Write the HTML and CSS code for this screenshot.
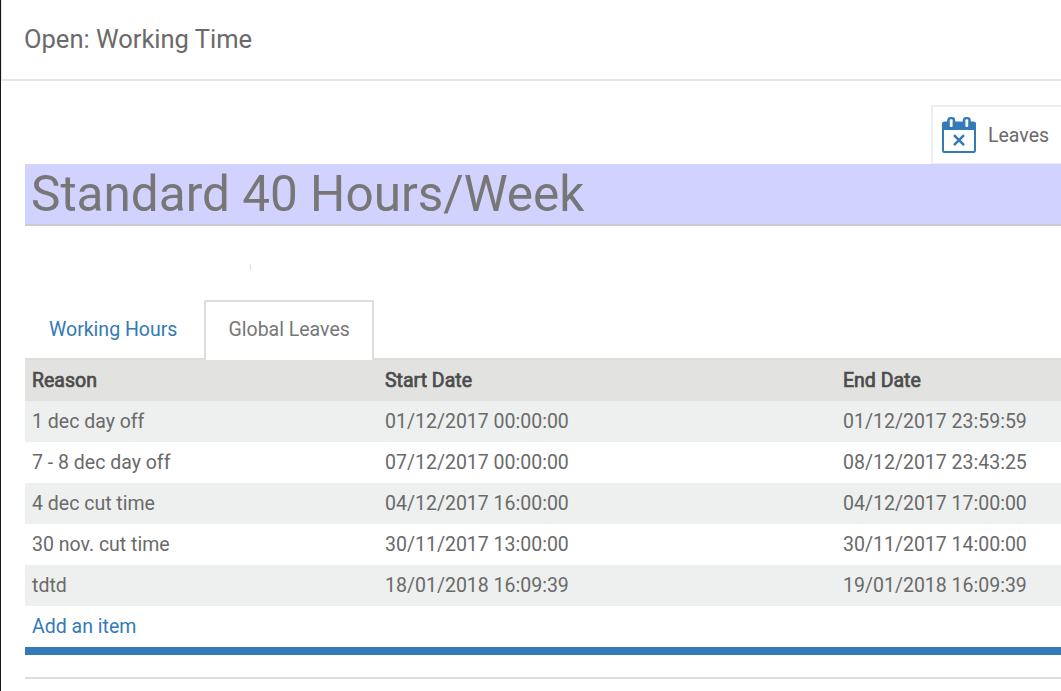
FILE: index.html
```html
<!DOCTYPE html>
<html lang="en">
<head>
<meta charset="utf-8">
<title>Open: Working Time</title>
<link rel="stylesheet" href="styles.css">
</head>
<body>
<div class="dialog">
  <header class="dialog-header"><h1 class="dialog-title">Open: Working Time</h1></header>
  <main class="sheet">
    <div class="button-box">
      <button class="stat-button">
        <svg class="calendar" width="34" height="37" viewBox="0 0 34 37" fill="none">
          <rect x="1" y="6" width="32" height="29" rx="1.8" stroke="#337ab7" stroke-width="2"/>
          <path d="M0 13V7Q0 4.5 2.5 4.5H31.5Q34 4.5 34 7V13Z" fill="#337ab7"/>
          <rect x="5.2" y="0" width="8" height="11.4" rx="3.4" fill="#337ab7"/>
          <rect x="20.8" y="0" width="8" height="11.4" rx="3.4" fill="#337ab7"/>
          <rect x="7.8" y="2.2" width="2.8" height="7.8" rx="1" fill="#fff"/>
          <rect x="23.4" y="2.2" width="2.8" height="7.8" rx="1" fill="#fff"/>
          <path d="M12 18.2L22 28.2M22 18.2L12 28.2" stroke="#337ab7" stroke-width="2.6"/>
        </svg>
        <span class="stat-label">Leaves</span>
      </button>
    </div>
    <h2 class="name-field">Standard 40 Hours/Week</h2>
    <div class="group"><span class="divider"></span></div>
    <nav class="tabs">
      <a class="tab">Working Hours</a>
      <a class="tab active">Global Leaves</a>
    </nav>
    <table class="list">
      <thead><tr><th class="reason">Reason</th><th class="start">Start Date</th><th>End Date</th></tr></thead>
      <tbody>
        <tr><td>1 dec day off</td><td>01/12/2017 00:00:00</td><td>01/12/2017 23:59:59</td></tr>
        <tr><td>7 - 8 dec day off</td><td>07/12/2017 00:00:00</td><td>08/12/2017 23:43:25</td></tr>
        <tr><td>4 dec cut time</td><td>04/12/2017 16:00:00</td><td>04/12/2017 17:00:00</td></tr>
        <tr><td>30 nov. cut time</td><td>30/11/2017 13:00:00</td><td>30/11/2017 14:00:00</td></tr>
        <tr><td>tdtd</td><td>18/01/2018 16:09:39</td><td>19/01/2018 16:09:39</td></tr>
        <tr><td colspan="3"><a class="add">Add an item</a></td></tr>
      </tbody>
    </table>
    <div class="list-footer"></div>
    <hr class="rule">
  </main>
</div>
</body>
</html>
```
FILE: styles.css
```css
* { box-sizing: border-box; }
body { margin: 0; background: #fff; overflow: hidden; font: 19.5px/28px Roboto, sans-serif; color: #6a6a6a; }
.dialog { height: 691px; border-left: 1px solid #15151a; }
.dialog-header { height: 81px; padding: 21px 0 0 22px; border-bottom: 2px solid #e5e5e5; border-left: 1px solid #e5e5e5; }
.dialog-title { margin: 0; font-size: 25.5px; line-height: 36px; font-weight: 400; }
.sheet { padding: 24px 0 0 24px; }
.button-box { display: flex; justify-content: flex-end; height: 59px; }
.stat-button { display: flex; align-items: center; gap: 12px; width: 130px; height: 59px; padding: 0 0 0 9px; background: #fff; border: 2px solid #eee; border-right: 0; border-bottom-width: 1px; font: inherit; color: inherit; white-space: nowrap; }
.stat-label { padding-top: 2px; }
.calendar { flex: none; }
.name-field { height: 62px; margin: 0; padding-left: 6px; background: #d2d2ff; border-bottom: 2px solid #ccc; color: #777; font-size: 49.5px; line-height: 60px; font-weight: 400; white-space: nowrap; }
.group { height: 74px; padding: 38px 0 0 225px; }
.divider { display: block; width: 1px; height: 6px; background: #ddd; }
.tabs { display: flex; height: 60px; border-bottom: 2px solid #ddd; color: #337ab7; }
.tab { width: 179px; height: 60px; padding: 16px 0 0 24px; white-space: nowrap; }
.tab.active { width: 170px; padding: 14px 0 0 22.5px; background: #fff; border: 2px solid #ddd; border-bottom: 0; color: #777; }
.list { width: 100%; border-collapse: collapse; table-layout: fixed; }
.list th, .list td { height: 41px; padding: 0 0 0 7px; text-align: left; white-space: nowrap; }
.list th { background: #e2e2e0; color: #4c4c4c; font-weight: 400; -webkit-text-stroke: .7px #4c4c4c; }
.reason { width: 353px; }
.start { width: 458px; }
.list tbody tr:nth-child(odd) { background: #eef0ef; }
.add { color: #337ab7; }
.list-footer { height: 8px; background: #337ab7; }
.rule { height: 2px; margin: 22px 0 0; border: 0; background: #ddd; }
```
